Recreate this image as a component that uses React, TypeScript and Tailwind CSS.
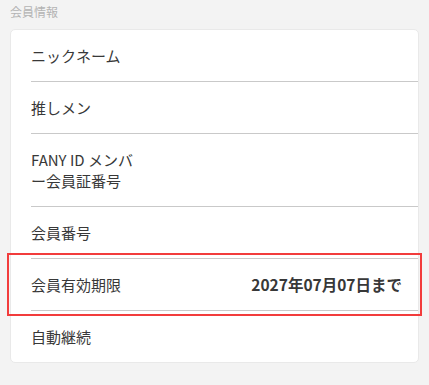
import React from 'react';

type Row = {
  label: string;
  value?: string;
  highlight?: boolean;
};

const rows: Row[] = [
  { label: 'ニックネーム' },
  { label: '推しメン' },
  { label: 'FANY ID メンバー会員証番号' },
  { label: '会員番号' },
  { label: '会員有効期限', value: '2027年07月07日まで', highlight: true },
  { label: '自動継続' },
];

export default function App() {
  return (
    <div
      className="min-h-screen w-[429px] h-[385px] bg-[#f3f3f3] px-[10px] pt-[3px] text-[#383838]"
      style={{ fontFamily: '"Noto Sans CJK JP", "Noto Sans", sans-serif' }}
    >
      <h2 className="text-[12px] leading-[18px] text-[#b3b3b3]">会員情報</h2>
      <div className="mt-[8px] rounded-[5px] border border-[#e9e9e9] bg-white">
        {rows.map((row, i) => (
          <div key={row.label} className="relative">
            {row.highlight && (
              <div className="pointer-events-none absolute -left-[4px] -right-[4px] -top-[6px] -bottom-[5px] border-2 border-[#f23c3c]" />
            )}
            <div
              className={
                'ml-5 flex items-center justify-between py-[15px] pr-4 ' +
                (i < rows.length - 1 ? 'border-b border-[#c9c9c9]' : '')
              }
            >
              <span className="w-[112px] text-[15px] leading-[21px]">{row.label}</span>
              {row.value && (
                <span className="text-[15.5px] font-bold leading-[21px]">{row.value}</span>
              )}
            </div>
          </div>
        ))}
      </div>
    </div>
  );
}
